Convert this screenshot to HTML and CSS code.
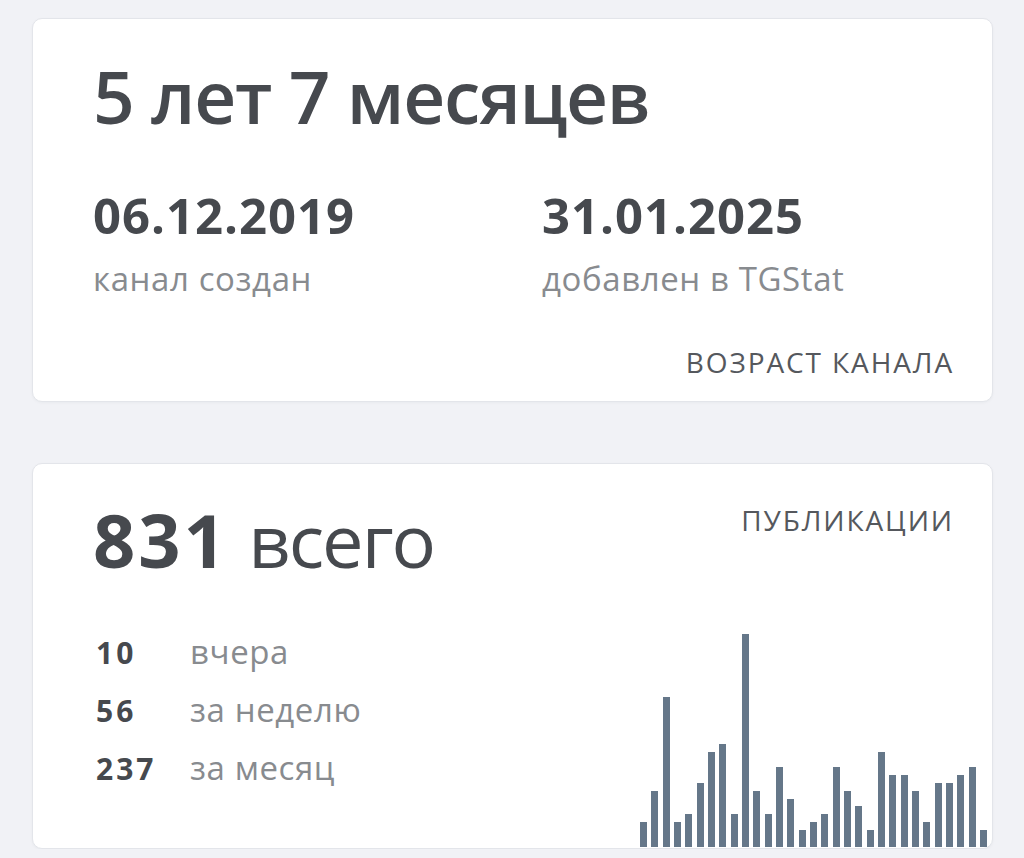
FILE: index.html
```html
<!DOCTYPE html>
<html lang="ru">
<head>
<meta charset="utf-8">
<title>TGStat</title>
<link rel="stylesheet" href="styles.css">
</head>
<body>
<main class="page">
  <section class="card card-age">
    <h1 class="age-title">5 лет 7 месяцев</h1>
    <div class="dates">
      <div class="date-item">
        <div class="date-value">06.12.2019</div>
        <div class="date-label">канал создан</div>
      </div>
      <div class="date-item">
        <div class="date-value">31.01.2025</div>
        <div class="date-label">добавлен в TGStat</div>
      </div>
    </div>
    <div class="card-caption">ВОЗРАСТ КАНАЛА</div>
  </section>

  <section class="card card-posts">
    <div class="posts-head">
      <div class="posts-total"><b>831</b> <span class="total-word">всего</span></div>
      <div class="card-caption caption-top">ПУБЛИКАЦИИ</div>
    </div>
    <div class="posts-body">
      <div class="stats">
        <div class="stat-row"><span class="stat-num">10</span><span class="stat-label">вчера</span></div>
        <div class="stat-row"><span class="stat-num">56</span><span class="stat-label">за неделю</span></div>
        <div class="stat-row"><span class="stat-num">237</span><span class="stat-label">за месяц</span></div>
      </div>
      <div class="chart">
        <span class="bar" style="height:25px"></span>
        <span class="bar" style="height:56px"></span>
        <span class="bar" style="height:150px"></span>
        <span class="bar" style="height:25px"></span>
        <span class="bar" style="height:33px"></span>
        <span class="bar" style="height:64px"></span>
        <span class="bar" style="height:95px"></span>
        <span class="bar" style="height:103px"></span>
        <span class="bar" style="height:33px"></span>
        <span class="bar" style="height:213px"></span>
        <span class="bar" style="height:56px"></span>
        <span class="bar" style="height:33px"></span>
        <span class="bar" style="height:80px"></span>
        <span class="bar" style="height:48px"></span>
        <span class="bar" style="height:17px"></span>
        <span class="bar" style="height:25px"></span>
        <span class="bar" style="height:33px"></span>
        <span class="bar" style="height:80px"></span>
        <span class="bar" style="height:56px"></span>
        <span class="bar" style="height:41px"></span>
        <span class="bar" style="height:17px"></span>
        <span class="bar" style="height:95px"></span>
        <span class="bar" style="height:72px"></span>
        <span class="bar" style="height:72px"></span>
        <span class="bar" style="height:56px"></span>
        <span class="bar" style="height:25px"></span>
        <span class="bar" style="height:64px"></span>
        <span class="bar" style="height:64px"></span>
        <span class="bar" style="height:72px"></span>
        <span class="bar" style="height:80px"></span>
        <span class="bar" style="height:17px"></span>
      </div>
    </div>
  </section>
</main>
</body>
</html>
```
FILE: styles.css
```css
* { box-sizing: border-box; }

html, body {
  margin: 0;
  padding: 0;
  background: #f1f2f6;
}

body {
  font-family: "Open Sans", "Noto Sans", sans-serif;
  color: #46494e;
}

.page {
  padding: 18px 31px 0 32px;
  display: flex;
  flex-direction: column;
  gap: 61px;
}

.card {
  background: #ffffff;
  border: 1px solid #e3e5ea;
  border-radius: 10px;
  box-shadow: 0 1px 3px rgba(30, 40, 60, 0.04);
}

.card-age {
  padding: 40px 40px 25px 60px;
  display: flex;
  flex-direction: column;
}

.age-title {
  margin: 0;
  font-size: 73px;
  line-height: 74px;
  font-weight: 600;
  letter-spacing: -1.3px;
  color: #46494e;
}

.dates {
  margin-top: 58px;
  display: grid;
  grid-template-columns: 449px 1fr;
}

.date-value {
  font-size: 49px;
  line-height: 49px;
  font-weight: 700;
  letter-spacing: 1px;
  color: #46494e;
}

.date-label {
  margin-top: 22px;
  font-size: 33px;
  line-height: 33px;
  letter-spacing: 0.6px;
  color: #888b8f;
}

.card-caption {
  font-size: 28px;
  line-height: 28px;
  color: #55585d;
  text-align: right;
  letter-spacing: 1.9px;
  margin-right: -2px;
}

.card-age .card-caption {
  margin-top: 53px;
}

.card-posts {
  padding: 39px 40px 1px 60px;
  display: flex;
  flex-direction: column;
}

.posts-head {
  display: flex;
  justify-content: space-between;
  align-items: flex-start;
}

.posts-total {
  font-size: 74px;
  line-height: 74px;
  font-weight: 400;
  color: #46494e;
}

.posts-total b {
  font-weight: 700;
  letter-spacing: 3px;
}

.total-word {
  letter-spacing: -2px;
}

.caption-top {
  margin-top: 3px;
}

.posts-body {
  display: flex;
  justify-content: space-between;
  align-items: flex-start;
}

.stats {
  margin-top: 46px;
  display: flex;
  flex-direction: column;
}

.stat-row {
  display: flex;
  align-items: baseline;
  height: 58px;
  line-height: 58px;
}

.stat-num {
  width: 97px;
  padding-left: 3px;
  font-size: 30px;
  font-weight: 700;
  letter-spacing: 3px;
  color: #46494e;
}

.stat-label {
  font-size: 33px;
  letter-spacing: 0.6px;
  color: #888b8f;
}

.chart {
  margin-top: 57px;
  margin-right: -35px;
  height: 213px;
  display: flex;
  align-items: flex-end;
  gap: 4.33px;
}

.bar {
  display: block;
  width: 7px;
  background: #657789;
}
```
